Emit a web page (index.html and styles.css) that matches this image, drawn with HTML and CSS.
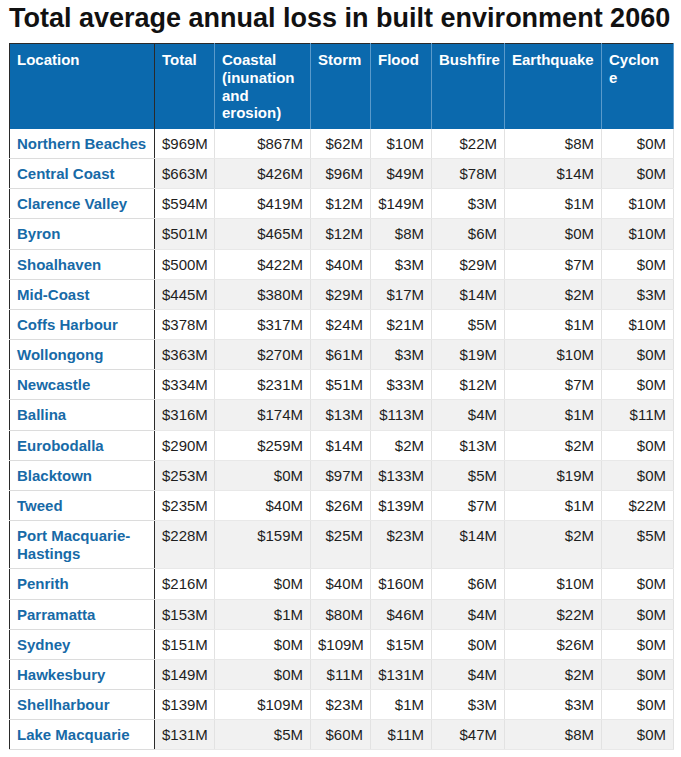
FILE: index.html
```html
<!DOCTYPE html>
<html>
<head>
<meta charset="utf-8">
<link rel="stylesheet" href="styles.css">
</head>
<body>
<div class="page">
  <h1 class="title">Total average annual loss in built environment 2060</h1>
  <table class="loss">
    <colgroup>
      <col class="c-loc"><col class="c-total"><col class="c-coast"><col class="c-storm"><col class="c-flood"><col class="c-bush"><col class="c-quake"><col class="c-cyc">
    </colgroup>
    <thead>
      <tr>
        <th class="loc">Location</th>
        <th>Total</th>
        <th>Coastal (inunation and erosion)</th>
        <th>Storm</th>
        <th>Flood</th>
        <th>Bushfire</th>
        <th>Earthquake</th>
        <th class="wrap">Cyclone</th>
      </tr>
    </thead>
    <tbody>
      <tr><td class="loc">Northern Beaches</td><td>$969M</td><td>$867M</td><td>$62M</td><td>$10M</td><td>$22M</td><td>$8M</td><td>$0M</td></tr>
      <tr><td class="loc">Central Coast</td><td>$663M</td><td>$426M</td><td>$96M</td><td>$49M</td><td>$78M</td><td>$14M</td><td>$0M</td></tr>
      <tr><td class="loc">Clarence Valley</td><td>$594M</td><td>$419M</td><td>$12M</td><td>$149M</td><td>$3M</td><td>$1M</td><td>$10M</td></tr>
      <tr><td class="loc">Byron</td><td>$501M</td><td>$465M</td><td>$12M</td><td>$8M</td><td>$6M</td><td>$0M</td><td>$10M</td></tr>
      <tr><td class="loc">Shoalhaven</td><td>$500M</td><td>$422M</td><td>$40M</td><td>$3M</td><td>$29M</td><td>$7M</td><td>$0M</td></tr>
      <tr><td class="loc">Mid-Coast</td><td>$445M</td><td>$380M</td><td>$29M</td><td>$17M</td><td>$14M</td><td>$2M</td><td>$3M</td></tr>
      <tr><td class="loc">Coffs Harbour</td><td>$378M</td><td>$317M</td><td>$24M</td><td>$21M</td><td>$5M</td><td>$1M</td><td>$10M</td></tr>
      <tr><td class="loc">Wollongong</td><td>$363M</td><td>$270M</td><td>$61M</td><td>$3M</td><td>$19M</td><td>$10M</td><td>$0M</td></tr>
      <tr><td class="loc">Newcastle</td><td>$334M</td><td>$231M</td><td>$51M</td><td>$33M</td><td>$12M</td><td>$7M</td><td>$0M</td></tr>
      <tr><td class="loc">Ballina</td><td>$316M</td><td>$174M</td><td>$13M</td><td>$113M</td><td>$4M</td><td>$1M</td><td>$11M</td></tr>
      <tr><td class="loc">Eurobodalla</td><td>$290M</td><td>$259M</td><td>$14M</td><td>$2M</td><td>$13M</td><td>$2M</td><td>$0M</td></tr>
      <tr><td class="loc">Blacktown</td><td>$253M</td><td>$0M</td><td>$97M</td><td>$133M</td><td>$5M</td><td>$19M</td><td>$0M</td></tr>
      <tr><td class="loc">Tweed</td><td>$235M</td><td>$40M</td><td>$26M</td><td>$139M</td><td>$7M</td><td>$1M</td><td>$22M</td></tr>
      <tr><td class="loc">Port Macquarie-Hastings</td><td>$228M</td><td>$159M</td><td>$25M</td><td>$23M</td><td>$14M</td><td>$2M</td><td>$5M</td></tr>
      <tr><td class="loc">Penrith</td><td>$216M</td><td>$0M</td><td>$40M</td><td>$160M</td><td>$6M</td><td>$10M</td><td>$0M</td></tr>
      <tr><td class="loc">Parramatta</td><td>$153M</td><td>$1M</td><td>$80M</td><td>$46M</td><td>$4M</td><td>$22M</td><td>$0M</td></tr>
      <tr><td class="loc">Sydney</td><td>$151M</td><td>$0M</td><td>$109M</td><td>$15M</td><td>$0M</td><td>$26M</td><td>$0M</td></tr>
      <tr><td class="loc">Hawkesbury</td><td>$149M</td><td>$0M</td><td>$11M</td><td>$131M</td><td>$4M</td><td>$2M</td><td>$0M</td></tr>
      <tr><td class="loc">Shellharbour</td><td>$139M</td><td>$109M</td><td>$23M</td><td>$1M</td><td>$3M</td><td>$3M</td><td>$0M</td></tr>
      <tr><td class="loc">Lake Macquarie</td><td>$131M</td><td>$5M</td><td>$60M</td><td>$11M</td><td>$47M</td><td>$8M</td><td>$0M</td></tr>
    </tbody>
  </table>
</div>
</body>
</html>
```

FILE: styles.css
```css
html, body {
  margin: 0;
  padding: 0;
  background: #ffffff;
}

.page {
  padding: 0 8px 0 9px;
  font-family: "Liberation Sans", Arial, sans-serif;
}

.title {
  margin: 0;
  padding-top: 3px;
  height: 40px;
  font-size: 27px;
  line-height: 30px;
  font-weight: bold;
  color: #111111;
  white-space: nowrap;
}

.loss {
  border-collapse: collapse;
  table-layout: fixed;
  width: 664px;
  border: 1px solid #2a2a2a;
  font-size: 15px;
  line-height: 18.15px;
}

.c-loc { width: 145px; }
.c-total { width: 60px; }
.c-coast { width: 96px; }
.c-storm { width: 60px; }
.c-flood { width: 61px; }
.c-bush { width: 73px; }
.c-quake { width: 97px; }
.c-cyc { width: 72px; }

.loss th {
  background: #0b69ad;
  color: #ffffff;
  font-size: 15px;
  line-height: 17.8px;
  font-weight: bold;
  text-align: left;
  vertical-align: top;
  padding: 7px 7px 6px 7px;
  border-right: 1px solid #5a9acb;
  height: 72px;
}

.loss th.loc {
  border-right: 1px solid #2a2a2a;
}

.loss th.wrap {
  overflow-wrap: anywhere;
  word-break: break-all;
}

.loss td {
  padding: 6px 7px 5px 7px;
  text-align: right;
  vertical-align: top;
  color: #1e1e1e;
  border-right: 1px solid #e2e2e2;
  border-bottom: 1px solid #e8e8e8;
  white-space: nowrap;
}

.loss tbody tr:nth-child(even) td {
  background: #f1f1f1;
}

.loss td.loc,
.loss tbody tr:nth-child(even) td.loc {
  background: #ffffff;
  text-align: left;
  font-weight: bold;
  color: #176aa7;
  white-space: normal;
  border-right: 1px solid #2a2a2a;
  border-bottom: 1px solid #dcdcdc;
}
```
